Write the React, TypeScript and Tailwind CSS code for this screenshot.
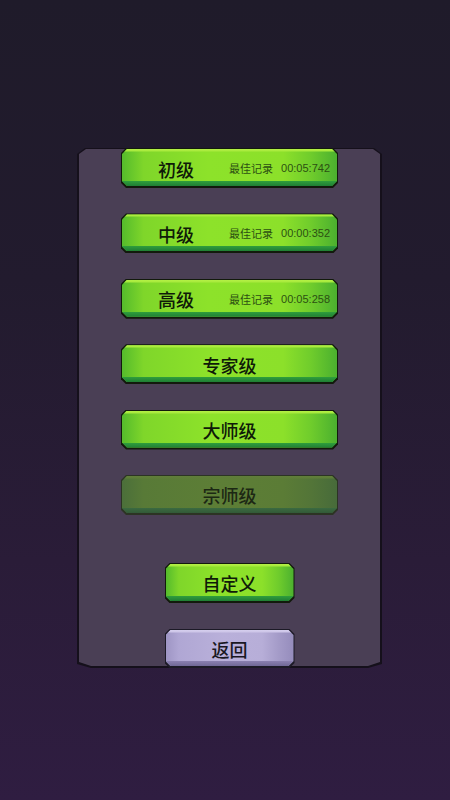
import React from "react";

type Variant = "green" | "disabled" | "lavender";

const chamfer =
  "[clip-path:polygon(5px_0,calc(100%_-_5px)_0,100%_5px,100%_calc(100%_-_5px),calc(100%_-_5px)_100%,5px_100%,0_calc(100%_-_5px),0_5px)]";

function GameButton({
  variant,
  className,
  children,
}: {
  variant: Variant;
  className: string;
  children: React.ReactNode;
}) {
  const outer =
    variant === "green"
      ? "bg-[#121a0c]"
      : variant === "disabled"
      ? "bg-[#2c3424]"
      : "bg-[#1c1a26]";
  const inner =
    variant === "green"
      ? "[background:linear-gradient(to_bottom,#b4f046_0,#a8ea3c_2px,transparent_3px,transparent_calc(100%_-_5px),#2f9e3c_calc(100%_-_5px),#1f7e34_100%),linear-gradient(to_right,#55bb2c_0%,#7fd62a_10%,#8de22a_40%,#8ce02a_75%,#6fcc2c_88%,#4bb02f_100%)]"
      : variant === "disabled"
      ? "[background:linear-gradient(to_bottom,#607e3a_0,#5e7c38_2px,transparent_3px,transparent_calc(100%_-_5px),#3b6a40_calc(100%_-_5px),#325a38_100%),linear-gradient(to_right,#4b6f3a_0%,#587a37_10%,#5d7e36_45%,#5b7c36_75%,#537538_88%,#476b3a_100%)]"
      : "[background:linear-gradient(to_bottom,#d6cfee_0,#cdc5e8_2px,transparent_3px,transparent_calc(100%_-_5px),#8a80b0_calc(100%_-_5px),#706896_100%),linear-gradient(to_right,#9e95c4_0%,#b0a7d4_10%,#b9b0da_45%,#b7aed8_75%,#a49bc8_88%,#958cbc_100%)]";
  return (
    <div className={`${outer} ${chamfer} flex p-[1px] pb-[2px] ${className}`}>
      <div className={`${inner} ${chamfer} flex flex-1 items-center pt-[2px]`}>
        {children}
      </div>
    </div>
  );
}

const cjk = "font-['Noto_Sans_CJK_SC','Noto_Sans',sans-serif]";

export default function App() {
  const records = [
    { name: "初级", time: "00:05:742" },
    { name: "中级", time: "00:00:352" },
    { name: "高级", time: "00:05:258" },
  ];
  return (
    <div className="w-[450px] h-[800px] overflow-hidden [background:linear-gradient(180deg,#1f1b2a_0%,#221b2e_35%,#2a1c38_70%,#2f1d41_100%)] pt-[148px] pl-[77px]">
      <div className="relative w-[305px] h-[520px]">
        <div className="absolute inset-0 bg-[#15101b] [clip-path:polygon(8px_0,calc(100%_-_8px)_0,100%_6px,100%_calc(100%_-_4px),calc(100%_-_14px)_100%,14px_100%,0_calc(100%_-_4px),0_6px)]" />
        <div className="absolute left-[2px] right-[2px] top-[1px] bottom-[2px] bg-[#4a3f55] [clip-path:polygon(7px_0,calc(100%_-_7px)_0,100%_5px,100%_calc(100%_-_4px),calc(100%_-_12px)_100%,12px_100%,0_calc(100%_-_4px),0_5px)]" />
        <div className={`relative flex flex-col items-center ${cjk}`}>
          <div className="flex flex-col gap-[25.4px]">
            {records.map((r) => (
              <GameButton key={r.name} variant="green" className="w-[217px] h-[40px]">
                <span className="pl-[36px] text-[18px] leading-none font-medium text-[#0f1a08]">
                  {r.name}
                </span>
                <span className="ml-auto text-[11px] leading-none text-[#2c5012]">最佳记录</span>
                <span className="ml-[8px] pr-[7px] text-[11px] leading-none text-[#2c5012] font-['Liberation_Sans','Noto_Sans_CJK_SC',sans-serif]">
                  {r.time}
                </span>
              </GameButton>
            ))}
            <GameButton variant="green" className="w-[217px] h-[40px]">
              <span className="w-full text-center text-[18px] leading-none font-medium text-[#0f1a08]">专家级</span>
            </GameButton>
            <GameButton variant="green" className="w-[217px] h-[40px]">
              <span className="w-full text-center text-[18px] leading-none font-medium text-[#0f1a08]">大师级</span>
            </GameButton>
            <GameButton variant="disabled" className="w-[217px] h-[40px]">
              <span className="w-full text-center text-[18px] leading-none font-medium text-[#1c2814]">宗师级</span>
            </GameButton>
          </div>
          <GameButton variant="green" className="mt-[48px] w-[130px] h-[40px]">
            <span className="w-full text-center text-[18px] leading-none font-medium text-[#0f1a08]">自定义</span>
          </GameButton>
          <GameButton variant="lavender" className="mt-[26px] w-[130px] h-[39px]">
            <span className="w-full text-center text-[18px] leading-none font-medium text-[#1a1822]">返回</span>
          </GameButton>
        </div>
      </div>
    </div>
  );
}
